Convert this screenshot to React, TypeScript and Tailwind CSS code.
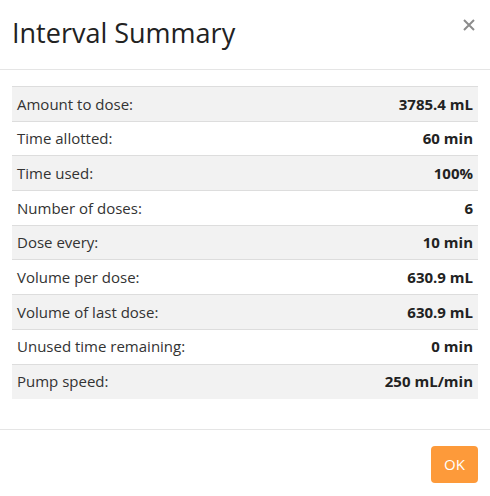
const rows: [string, string][] = [
  ['Amount to dose:', '3785.4 mL'],
  ['Time allotted:', '60 min'],
  ['Time used:', '100%'],
  ['Number of doses:', '6'],
  ['Dose every:', '10 min'],
  ['Volume per dose:', '630.9 mL'],
  ['Volume of last dose:', '630.9 mL'],
  ['Unused time remaining:', '0 min'],
  ['Pump speed:', '250 mL/min'],
]

export default function App() {
  return (
    <div className="w-[490px] h-[496px] bg-white text-[#333] font-['Open_Sans',sans-serif]">
      <div className="flex items-start justify-between h-[70px] border-b border-[#e5e5e5] pl-3 pr-[15px]">
        <h4 className="text-[27px] leading-none mt-[19px] text-[#222]">Interval Summary</h4>
        <button className="mt-[19px] text-[#8c8c8c]">
          <svg width="12" height="12" viewBox="0 0 12 12">
            <path d="M1 1L11 11M11 1L1 11" stroke="currentColor" strokeWidth="2" />
          </svg>
        </button>
      </div>
      <div className="px-3 pt-4 pb-[30px] border-b border-[#e5e5e5]">
        <table className="w-full border-collapse text-[15px]">
          <tbody>
            {rows.map(([label, value], i) => (
              <tr key={label} className={`border-t border-[#dddddd] ${i % 2 === 0 ? 'bg-[#f2f2f2]' : 'bg-white'}`}>
                <td className="h-[34.7px] px-[5px] py-0">{label}</td>
                <td className="h-[34.7px] px-[5px] py-0 text-right font-bold text-[#222]">{value}</td>
              </tr>
            ))}
          </tbody>
        </table>
      </div>
      <div className="flex justify-end pt-4 pr-3">
        <button className="w-[47px] h-[37px] rounded bg-[#fd9a3a] text-white text-[15px]">OK</button>
      </div>
    </div>
  )
}
